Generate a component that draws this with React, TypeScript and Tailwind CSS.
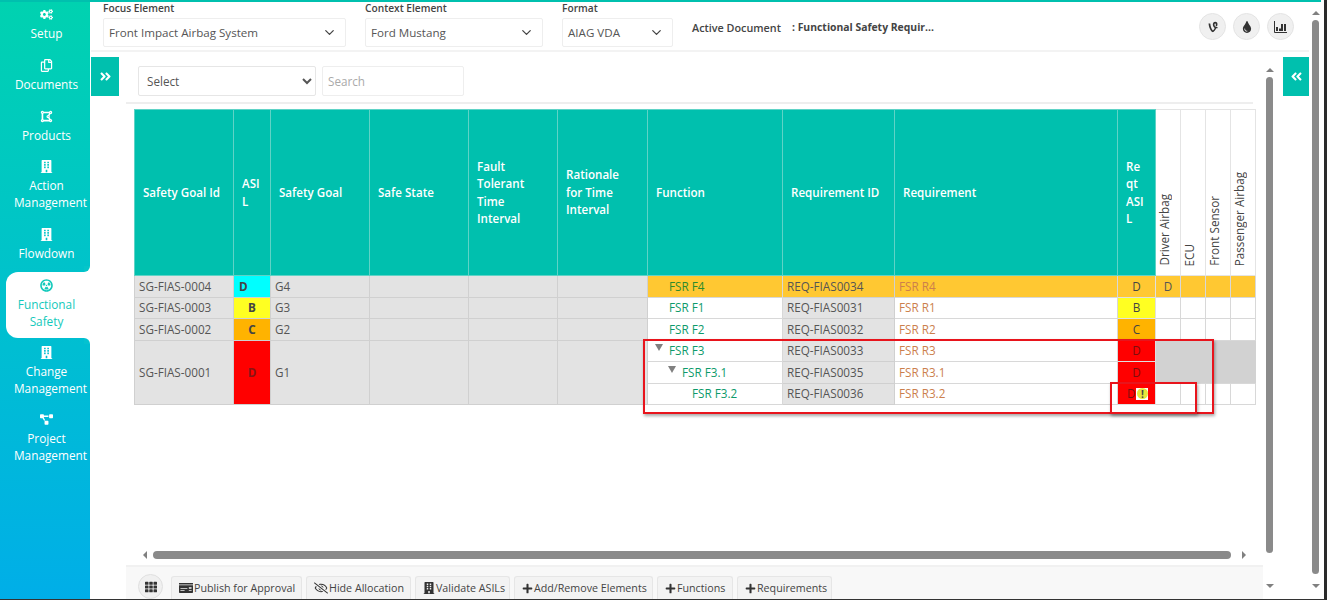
import { FaCogs, FaRegCopy, FaBuilding, FaRadiationAlt, FaProjectDiagram, FaVine, FaTint, FaTh, FaRegEyeSlash, FaPlus, FaMoneyCheck, FaAngleDoubleRight, FaAngleDoubleLeft, FaDrawPolygon } from 'react-icons/fa';
import { ChevronDown } from 'lucide-react';
import type { ReactNode } from 'react';

const navItems = [
  { label: ['Setup'], icon: <FaCogs />, cls: 'h-[51px]' },
  { label: ['Documents'], icon: <FaRegCopy />, cls: 'h-[51px]' },
  { label: ['Products'], icon: <FaDrawPolygon />, cls: 'h-[50px]' },
  { label: ['Action', 'Management'], icon: <FaBuilding />, cls: 'h-[68px]' },
  { label: ['Flowdown'], icon: <FaBuilding />, cls: 'h-[46px]' },
];

const navItemsAfter = [
  { label: ['Change', 'Management'], icon: <FaBuilding />, cls: 'h-[67px]' },
  { label: ['Project', 'Management'], icon: <FaProjectDiagram />, cls: 'h-[68px]' },
];

function NavItem({ label, icon, cls }: { label: string[]; icon: ReactNode; cls: string }) {
  return (
    <div className={`flex flex-col items-center pl-[3px] text-white ${cls}`}>
      <div className="flex h-[17px] items-center text-[13px]">{icon}</div>
      <div className="mt-[2px] text-center text-[11.8px] leading-[17px]">
        {label.map((l) => (
          <div key={l} className={l === 'Management' ? 'pl-[8px]' : ''}>
            {l}
          </div>
        ))}
      </div>
    </div>
  );
}

function Sidebar() {
  return (
    <div className="h-full w-[91px] shrink-0 border-r border-white bg-gradient-to-b from-[#00d2b0] to-[#00aee8] pt-[4px]">
      {navItems.map((n) => (
        <NavItem key={n.label[0]} {...n} />
      ))}
      <div className="relative ml-[6px] flex h-[66px] flex-col items-center rounded-l-xl bg-white pr-[3px] pt-[5px] text-[#12c9bb]">
        {/* curved notches where the active tab meets the rail */}
        <div className="absolute -top-[6px] right-0 h-[6px] w-[6px] bg-white">
          <div className="h-full w-full rounded-br-[6px] bg-[#05c5c9]" />
        </div>
        <div className="absolute -bottom-[6px] right-0 h-[6px] w-[6px] bg-white">
          <div className="h-full w-full rounded-tr-[6px] bg-[#04c2d0]" />
        </div>
        <div className="flex h-[17px] items-center text-[13px]">
          <FaRadiationAlt />
        </div>
        <div className="mt-[2px] text-center text-[11.8px] leading-[17px]">
          <div>Functional</div>
          <div>Safety</div>
        </div>
      </div>
      <div className="h-[6px]" />
      {navItemsAfter.map((n) => (
        <NavItem key={n.label[0]} {...n} />
      ))}
    </div>
  );
}

function HeaderSelect({ label, value, width }: { label: string; value: string; width: string }) {
  return (
    <div className={width}>
      <div className="h-[16px] text-[10.2px] font-semibold leading-[13px] text-[#444]">{label}</div>
      <div className="flex h-[29px] items-center justify-between rounded-[2px] border border-[#eee] pl-[5px] pr-[8px] text-[11.6px] text-[#555]">
        <span>{value}</span>
        <ChevronDown size={15} className="text-[#444]" />
      </div>
    </div>
  );
}

function RoundIcon({ children }: { children: ReactNode }) {
  return (
    <div className="flex h-[27px] w-[27px] items-center justify-center rounded-full border border-[#e4e4e4] bg-[#f0f0f0] text-[12px] text-[#333]">
      {children}
    </div>
  );
}

function Header() {
  return (
    <div className="flex h-[50px] shrink-0 items-start border-b-2 border-[#f3f3f3] pl-[12px]">
      <div className="flex gap-[19px]">
        <HeaderSelect label="Focus Element" value="Front Impact Airbag System" width="w-[243px]" />
        <HeaderSelect label="Context Element" value="Ford Mustang" width="w-[178px]" />
        <HeaderSelect label="Format" value="AIAG VDA" width="w-[111px]" />
      </div>
      <div className="ml-[19px] mt-[18px] flex text-[10.8px] font-semibold leading-[15px] text-[#444]">
        <span className="w-[100px]">Active Document</span>
        <span className="text-[10.4px] font-bold">: Functional Safety Requir...</span>
      </div>
      <div className="ml-auto mr-[15px] mt-[11px] flex gap-[7px]">
        <RoundIcon>
          <FaVine />
        </RoundIcon>
        <RoundIcon>
          <FaTint />
        </RoundIcon>
        <RoundIcon>
          <svg width="13" height="12" viewBox="0 0 13 12" fill="none" stroke="#333">
            <path d="M.5 0v11.5H13" strokeWidth="1" />
            <path d="M3 10V6M6 10V7.5M8 10V3M11 10V3" strokeWidth="2" />
          </svg>
        </RoundIcon>
      </div>
    </div>
  );
}

const colWidths = [99, 37, 99, 99, 89, 90, 135, 112, 223, 38, 25, 25, 25, 25];

const headers = [
  'Safety Goal Id',
  'ASIL',
  'Safety Goal',
  'Safe State',
  'Fault Tolerant Time Interval',
  'Rationale for Time Interval',
  'Function',
  'Requirement ID',
  'Requirement',
  'Reqt ASIL',
];

const allocations = ['Driver Airbag', 'ECU', 'Front Sensor', 'Passenger Airbag'];

const leftCell = 'border border-[#d0d0d0] bg-[#e3e3e3] pl-[4px] text-[#555]';
const plainCell = 'border border-[#d8d8d8]';

type Row = {
  h: string;
  goal?: { id: string; name: string; asil: string; color: string; left?: boolean; span?: number };
  fn: ReactNode;
  req: string;
  reqId: string;
  reqAsil: ReactNode;
  asilColor: string;
  alloc: string;
  highlight?: boolean;
};

const Triangle = () => (
  <span className="mr-[6px] mb-[4px] inline-block h-0 w-0 border-x-[4px] border-t-[7px] border-x-transparent border-t-[#808080]" />
);

const rows: Row[] = [
  {
    h: 'h-[22px]',
    goal: { id: 'SG-FIAS-0004', name: 'G4', asil: 'D', color: 'bg-[#00ffff]', left: true },
    fn: <span className="pl-[21px]">FSR F4</span>,
    reqId: 'REQ-FIAS0034',
    req: 'FSR R4',
    reqAsil: 'D',
    asilColor: 'bg-[#ffc832]',
    alloc: '',
    highlight: true,
  },
  {
    h: 'h-[21px]',
    goal: { id: 'SG-FIAS-0003', name: 'G3', asil: 'B', color: 'bg-[#ffff22]' },
    fn: <span className="pl-[21px]">FSR F1</span>,
    reqId: 'REQ-FIAS0031',
    req: 'FSR R1',
    reqAsil: 'B',
    asilColor: 'bg-[#ffff22]',
    alloc: '',
  },
  {
    h: 'h-[22px]',
    goal: { id: 'SG-FIAS-0002', name: 'G2', asil: 'C', color: 'bg-[#ffb300]' },
    fn: <span className="pl-[21px]">FSR F2</span>,
    reqId: 'REQ-FIAS0032',
    req: 'FSR R2',
    reqAsil: 'C',
    asilColor: 'bg-[#ffb300]',
    alloc: '',
  },
  {
    h: 'h-[21px]',
    goal: { id: 'SG-FIAS-0001', name: 'G1', asil: 'D', color: 'bg-[#ff0000]', span: 3 },
    fn: (
      <span className="pl-[7px]">
        <Triangle />
        FSR F3
      </span>
    ),
    reqId: 'REQ-FIAS0033',
    req: 'FSR R3',
    reqAsil: 'D',
    asilColor: 'bg-[#ff0000]',
    alloc: 'bg-[#d2d2d2]',
  },
  {
    h: 'h-[22px]',
    fn: (
      <span className="pl-[20px]">
        <Triangle />
        FSR F3.1
      </span>
    ),
    reqId: 'REQ-FIAS0035',
    req: 'FSR R3.1',
    reqAsil: 'D',
    asilColor: 'bg-[#ff0000]',
    alloc: 'bg-[#d2d2d2]',
  },
  {
    h: 'h-[21px]',
    fn: <span className="pl-[44px]">FSR F3.2</span>,
    reqId: 'REQ-FIAS0036',
    req: 'FSR R3.2',
    reqAsil: (
      <div className="flex items-center pl-[9px] text-[#7a0f0f]">
        D
        <span className="ml-[1px] flex h-[12px] w-[12px] items-center justify-center bg-white">
          <span className="flex h-[11px] w-[11px] items-center justify-center rounded-full bg-[#e6e63a] text-[10px] font-bold leading-none text-[#444]">
            !
          </span>
        </span>
      </div>
    ),
    asilColor: 'bg-[#ff0000]',
    alloc: '',
  },
];

function RiskTable() {
  return (
    <table className="w-[1121px] table-fixed border-collapse text-[11.7px]">
      <colgroup>
        {colWidths.map((w, i) => (
          <col key={i} style={{ width: w }} />
        ))}
      </colgroup>
      <thead>
        <tr className="h-[166px]">
          {headers.map((h) => (
            <th
              key={h}
              className={`border border-[#5fd3c6] bg-[#00c0ae] pl-[8px] text-left text-[11.6px] font-semibold leading-[17.5px] text-white ${h.startsWith('Rationale') ? 'pr-[14px]' : 'pr-[8px]'}`}
              style={{ wordBreak: h.includes('ASIL') ? 'break-all' : 'normal' }}
            >
              {h}
            </th>
          ))}
          {allocations.map((a) => (
            <th key={a} className="border border-[#e4e4e4] pb-[9px] align-bottom font-normal">
              <div className="mx-auto rotate-180 text-left text-[11.7px] leading-[16px] text-[#444] [writing-mode:vertical-rl]">{a}</div>
            </th>
          ))}
        </tr>
      </thead>
      <tbody>
        {rows.map((r) => {
          const rowBg = r.highlight ? 'bg-[#ffc832]' : '';
          return (
            <tr key={r.reqId} className={r.h}>
              {r.goal && (
                <>
                  <td rowSpan={r.goal.span} className={leftCell}>
                    {r.goal.id}
                  </td>
                  <td
                    rowSpan={r.goal.span}
                    className={`border border-[#d0d0d0] font-bold ${r.goal.color} ${r.goal.left ? 'pl-[5px] text-[#0b6b6b]' : 'text-center'} ${r.goal.asil === 'D' && !r.goal.left ? 'text-[#8a1414]' : 'text-[#444]'}`}
                  >
                    {r.goal.asil}
                  </td>
                  <td rowSpan={r.goal.span} className={leftCell}>
                    {r.goal.name}
                  </td>
                  <td rowSpan={r.goal.span} className={leftCell} />
                  <td rowSpan={r.goal.span} className={leftCell} />
                  <td rowSpan={r.goal.span} className={leftCell} />
                </>
              )}
              <td className={`${plainCell} ${rowBg} whitespace-nowrap ${r.highlight ? 'text-[#2c8a2c]' : 'text-[#0e9a6a]'}`}>{r.fn}</td>
              <td className={`border border-[#d0d0d0] pl-[4px] text-[#555] ${r.highlight ? rowBg : 'bg-[#e3e3e3]'}`}>{r.reqId}</td>
              <td className={`${plainCell} ${rowBg} pl-[4px] text-[#cc7f4d]`}>{r.req}</td>
              <td className={`border border-[#e0e0e0] text-center ${r.asilColor} ${r.reqAsil === 'D' && !r.highlight ? 'text-[#7a0f0f]' : 'text-[#444]'}`}>
                {r.reqAsil}
              </td>
              {allocations.map((a, i) => (
                <td key={a} className={`${r.alloc ? '' : plainCell} ${r.alloc} ${rowBg} text-center text-[#555]`}>
                  {r.highlight && i === 0 ? 'D' : ''}
                </td>
              ))}
            </tr>
          );
        })}
      </tbody>
    </table>
  );
}

function ToolButton({ icon, label, w, iconCls }: { icon: ReactNode; label: string; w: string; iconCls: string }) {
  return (
    <div className={`flex h-[23px] items-center gap-[1px] rounded-t-[3px] border border-b-0 border-[#e6e6e6] bg-[#f3f3f3] pl-[7px] text-[10.7px] text-[#444] ${w}`}>
      <span className={`flex text-[#333] ${iconCls}`}>{icon}</span>
      {label}
    </div>
  );
}

function Toolbar() {
  return (
    <div className="flex h-[34px] shrink-0 items-end gap-[4px] border-t-2 border-[#f1f1f1] bg-[#f8f8f8] pl-[12px]">
      <div className="mr-[4px] flex h-[25px] w-[25px] items-center justify-center rounded-full border border-[#e0e0e0] bg-[#f0f0f0] text-[12px] text-[#333]">
        <FaTh />
      </div>
      <ToolButton icon={<FaMoneyCheck />} iconCls="text-[14px]" label="Publish for Approval" w="w-[131px]" />
      <ToolButton icon={<FaRegEyeSlash />} iconCls="text-[14px]" label="Hide Allocation" w="w-[105px]" />
      <ToolButton icon={<FaBuilding />} iconCls="text-[12px]" label="Validate ASILs" w="w-[95px]" />
      <ToolButton icon={<FaPlus />} iconCls="text-[11px]" label="Add/Remove Elements" w="w-[139px]" />
      <ToolButton icon={<FaPlus />} iconCls="text-[11px]" label="Functions" w="w-[76px]" />
      <ToolButton icon={<FaPlus />} iconCls="text-[11px]" label="Requirements" w="w-[95px]" />
    </div>
  );
}

function VScroll({ pt, thumb, w }: { pt: string; thumb: string; w: string }) {
  return (
    <div className={`flex h-full shrink-0 flex-col items-center ${pt} ${w}`}>
      <span className="h-0 w-0 border-x-[4px] border-b-[4px] border-x-transparent border-b-[#808080]" />
      <div className={`mt-[5px] w-[7px] rounded-full bg-[#8a8a8a] ${thumb}`} />
      <span className="mt-auto mb-[11px] h-0 w-0 border-x-[4px] border-t-[4px] border-x-transparent border-t-[#808080]" />
    </div>
  );
}

function ToggleButton({ children, w }: { children: ReactNode; w: string }) {
  return <div className={`flex h-[39px] shrink-0 items-center justify-center bg-[#00c0ae] text-[13px] text-white ${w}`}>{children}</div>;
}

export default function App() {
  return (
    <div className="relative h-[600px] w-[1327px] overflow-hidden border-b border-r-[3px] border-b-[#333] border-r-[#2a2a2a] bg-white font-['Open_Sans',sans-serif]">
      <div className="h-[2px] w-[1321px] bg-[#00c0ae]" />
      <div className="flex h-[597px]">
        <Sidebar />
        <div className="flex min-w-0 flex-1">
          <div className="flex min-w-0 flex-1 flex-col">
            <Header />
            <div className="flex min-h-0 flex-1 pt-[5px]">
              <ToggleButton w="w-[28px]">
                <FaAngleDoubleRight />
              </ToggleButton>
              <div className="ml-[7px] flex w-[1137px] flex-col">
                <div className="mr-[10px] flex h-[47px] shrink-0 gap-[6px] border-b-2 border-[#eee] pl-[12px] pt-[9px]">
                  <select className="h-[30px] w-[178px] rounded-[2px] border border-[#e6e6e6] bg-white pl-[4px] text-[11.7px] text-[#555]">
                    <option>Select</option>
                  </select>
                  <input
                    placeholder="Search"
                    className="h-[30px] w-[142px] rounded-[2px] border border-[#eee] pl-[5px] text-[11.7px] placeholder:text-[#aaa]"
                  />
                </div>
                <div className="min-h-0 flex-1 pl-[8px] pt-[5px]">
                  <RiskTable />
                </div>
                <div className="mb-[6px] ml-[17px] mr-[17px] flex h-[8px] shrink-0 items-center justify-between">
                  <span className="h-0 w-0 border-y-[4px] border-r-[4px] border-y-transparent border-r-[#808080]" />
                  <div className="ml-[6px] mr-[11px] h-[8px] flex-1 rounded-full bg-[#8a8a8a]" />
                  <span className="h-0 w-0 border-y-[4px] border-l-[4px] border-y-transparent border-l-[#808080]" />
                </div>
                <Toolbar />
              </div>
              <VScroll pt="pt-[11px]" thumb="h-[476px]" w="w-[13px]" />
              <div className="ml-[7px]">
                <ToggleButton w="w-[26px]">
                  <FaAngleDoubleLeft />
                </ToggleButton>
              </div>
            </div>
          </div>
          <VScroll pt="pt-[9px] pr-[2px]" thumb="h-[554px]" w="w-[15px]" />
        </div>
      </div>

      {/* red annotation boxes */}
      <div className="absolute left-[643px] top-[339px] h-[75px] w-[571px] border-2 border-[#e8141c] shadow-[1px_2px_3px_rgba(0,0,0,0.35)]" />
      <div className="absolute left-[1110px] top-[382px] h-[32px] w-[87px] border-2 border-[#e8141c] shadow-[1px_2px_3px_rgba(0,0,0,0.35)]" />
    </div>
  );
}
